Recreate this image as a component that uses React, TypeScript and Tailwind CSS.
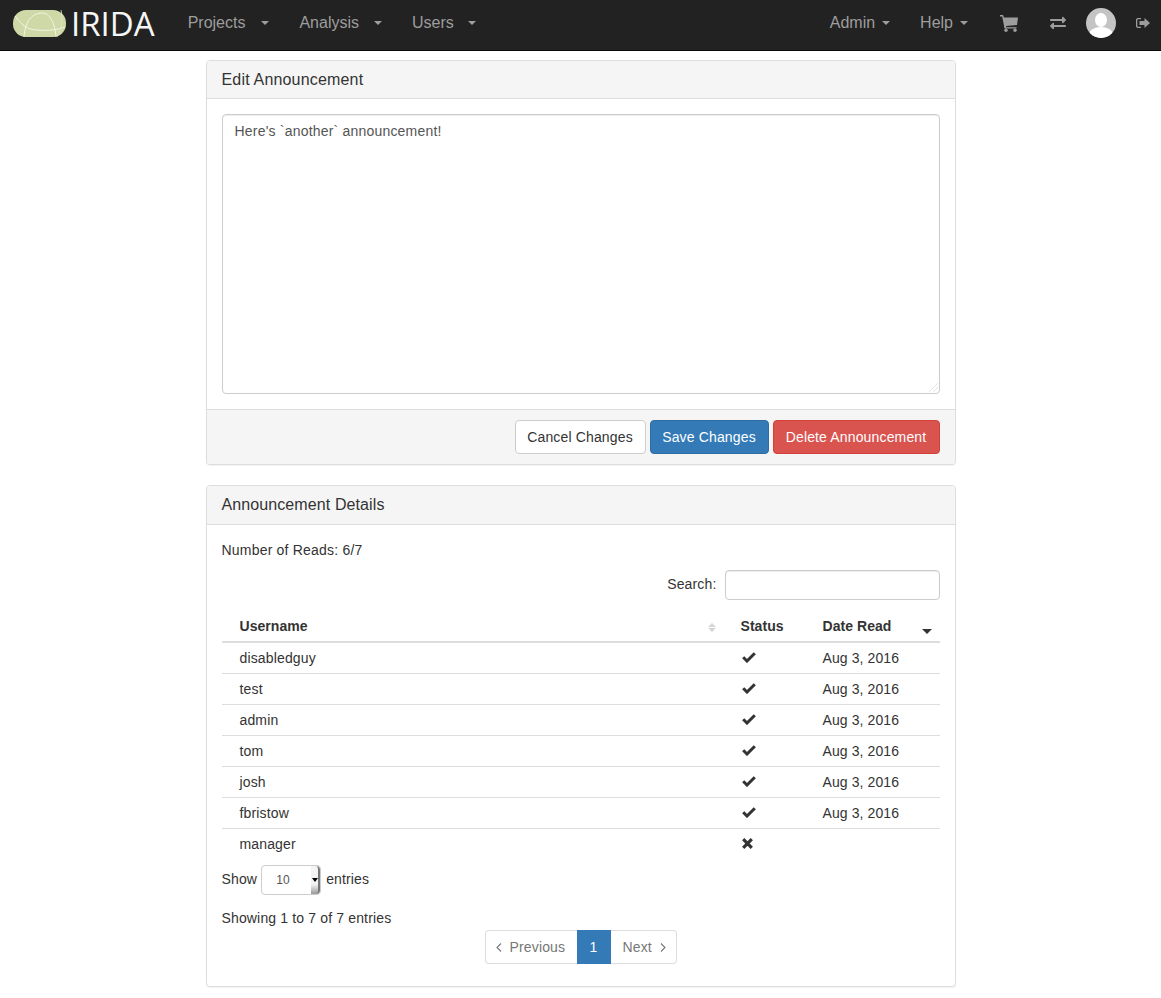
import { FaExchangeAlt } from "react-icons/fa";

const reads = [
  { name: "disabledguy", read: true },
  { name: "test", read: true },
  { name: "admin", read: true },
  { name: "tom", read: true },
  { name: "josh", read: true },
  { name: "fbristow", read: true },
  { name: "manager", read: false },
];

function Caret({ className }: { className: string }) {
  return <span className={`inline-block h-0 w-0 border-x-4 border-t-4 border-x-transparent border-t-[#9d9d9d] ${className}`} />;
}

function NavLink({ label, caretGap }: { label: string; caretGap: string }) {
  return (
    <a className="flex items-center text-base text-[#9d9d9d]">
      {label}
      <Caret className={caretGap} />
    </a>
  );
}

function Logo() {
  return (
    <svg width="53" height="27" viewBox="0 0 53 27" className="shrink-0">
      <rect x="0" y="0" width="53" height="27" rx="13" fill="#cfd9a8" />
      <path d="M2 6C8 14 14 20 24 20C34 21 44 20 52 17" fill="none" stroke="#f2f5e4" strokeWidth="1" />
      <path d="M11 27C12 13 18 3 29 3C37 3 42 13 43 27" fill="none" stroke="#f2f5e4" strokeWidth="1" />
      <path d="M48 0C50 8 49 17 44 27" fill="none" stroke="#dfe6c4" strokeWidth="0.8" />
    </svg>
  );
}

function CartIcon() {
  return (
    <svg width="18" height="17" viewBox="0 0 18 17" className="ml-[32px]" fill="#9d9d9d">
      <path d="M0 0h3l1 2.500h14l-1 7.500-11 1 .3 1.200H16.500V13.500H4.500L2.200 1.500H0z" />
      <circle cx="6" cy="15.300" r="1.700" />
      <circle cx="15" cy="15.300" r="1.700" />
    </svg>
  );
}

function Avatar() {
  return (
    <svg width="30" height="30" viewBox="0 0 30 30" className="ml-[20px]">
      <clipPath id="avatar-clip"><circle cx="15" cy="15" r="15" /></clipPath>
      <g clipPath="url(#avatar-clip)">
        <rect width="30" height="30" fill="#c4c4c4" />
        <ellipse cx="15" cy="12" rx="6" ry="7" fill="#fff" />
        <ellipse cx="15" cy="27" rx="12" ry="8" fill="#fff" />
      </g>
    </svg>
  );
}

function LogoutIcon() {
  return (
    <svg width="14" height="10" viewBox="0 0 14 10" className="ml-[20px]" fill="#9d9d9d">
      <path d="M5 0H2C.8 0 0 .8 0 2v6c0 1.200.8 2 2 2h3V8.700H2.300c-.6 0-1-.4-1-1V2.300c0-.6.4-1 1-1H5z" />
      <path d="M8.500 0L14 5l-5.500 5V7H3.500V3h5z" />
    </svg>
  );
}

function CheckIcon() {
  return (
    <svg width="14" height="11" viewBox="0 0 14 11" fill="none" stroke="#333" strokeWidth="3">
      <path d="M1.200 5.200L5 9L12.800 1.300" />
    </svg>
  );
}

function CrossIcon() {
  return (
    <svg width="11" height="11" viewBox="0 0 11 11" fill="none" stroke="#333" strokeWidth="3.200">
      <path d="M1.200 1.200L9.800 9.800M9.800 1.200L1.200 9.800" />
    </svg>
  );
}

function Chevron({ d }: { d: string }) {
  return (
    <svg width="6" height="9" viewBox="0 0 6 9" fill="none" stroke="#777" strokeWidth="1.100">
      <path d={d} />
    </svg>
  );
}

function SortIcon() {
  return (
    <span className="mt-[3px] flex flex-col gap-px">
      <span className="h-0 w-0 border-x-[4px] border-b-[4px] border-x-transparent border-b-[#d6d6d6]" />
      <span className="h-0 w-0 border-x-[4px] border-t-[4px] border-x-transparent border-t-[#d6d6d6]" />
    </span>
  );
}

function Panel({ title, tall, spacing, children }: { title: string; tall?: boolean; spacing: string; children: React.ReactNode }) {
  return (
    <section className="overflow-hidden rounded border border-[#ddd] bg-white shadow-[0_1px_1px_rgba(0,0,0,0.05)]">
      <h3 className={`${tall ? "h-[39px] leading-[38px]" : "h-[38px] leading-[37px]"} border-b border-[#ddd] bg-[#f5f5f5] px-[15px] text-base text-[#333] ${spacing}`}>{title}</h3>
      {children}
    </section>
  );
}

export default function App() {
  return (
    <div className="min-h-[998px] bg-white text-sm tracking-[0.15px] text-[#333] [font-family:'Liberation_Sans',Arial,sans-serif]">
      <nav className="flex h-[51px] items-center border-b border-[#080808] bg-[#222] pb-[4px] pl-[13px] tracking-normal">
        <Logo />
        <span className="ml-[5px] text-[33px] font-normal leading-none text-[#f6f6f6] [font-family:'Open_Sans','Liberation_Sans',sans-serif]">IRIDA</span>
        <div className="ml-[33px] flex items-center">
          <NavLink label="Projects" caretGap="ml-[16px]" />
          <div className="ml-[30px]"><NavLink label="Analysis" caretGap="ml-[15px]" /></div>
          <div className="ml-[30px]"><NavLink label="Users" caretGap="ml-[14px]" /></div>
        </div>
        <div className="ml-auto flex items-center pr-[11px]">
          <NavLink label="Admin" caretGap="ml-[7px]" />
          <div className="ml-[30px]"><NavLink label="Help" caretGap="ml-[7px]" /></div>
          <CartIcon />
          <FaExchangeAlt className="ml-[32px] text-[16px] text-[#9d9d9d]" />
          <Avatar />
          <LogoutIcon />
        </div>
      </nav>

      <main className="mx-auto mt-[9px] flex w-[750px] flex-col gap-[20px]">
        <Panel title="Edit Announcement" spacing="tracking-[0.18px]">
          <div className="p-[15px]">
            <div className="relative">
              <textarea
                readOnly
                defaultValue="Here's `another` announcement!"
                className="block h-[280px] w-full resize-none rounded border border-[#ccc] px-3 py-1.5 text-sm leading-5 tracking-[0.2px] text-[#555] shadow-[inset_0_1px_1px_rgba(0,0,0,0.075)] outline-none"
              />
              <svg width="9" height="9" viewBox="0 0 9 9" className="absolute bottom-[2px] right-[2px]" stroke="#e4e4e4" fill="none">
                <path d="M0 9L9 0M4 9L9 4" />
              </svg>
            </div>
          </div>
          <div className="flex h-[55px] items-center justify-end gap-1 border-t border-[#ddd] bg-[#f5f5f5] px-[15px]">
            <button className="h-[34px] w-[131px] rounded border border-[#ccc] bg-white text-[#333]">Cancel Changes</button>
            <button className="h-[34px] w-[119px] rounded border border-[#2e6da4] bg-[#337ab7] text-white">Save Changes</button>
            <button className="h-[34px] w-[167px] rounded border border-[#d43f3a] bg-[#d9534f] text-white">Delete Announcement</button>
          </div>
        </Panel>

        <Panel title="Announcement Details" tall spacing="tracking-[0.1px]">
          <div className="p-[15px] pb-[22px]">
            <p className="leading-5 tracking-[0.2px]">Number of Reads: 6/7</p>
            <div className="mt-[10px] flex items-center justify-end gap-2">
              <label className="pb-[2px] pl-px">Search:</label>
              <input className="h-[30px] w-[215px] rounded border border-[#ccc] shadow-[inset_0_1px_1px_rgba(0,0,0,0.075)] outline-none" />
            </div>
            <table className="mt-[10px] w-full border-collapse">
              <thead>
                <tr className="h-[32px] border-b-2 border-[#ddd] text-left font-bold tracking-[0.05px]">
                  <th className="w-[501px] pl-[18px]">
                    <div className="flex items-center justify-between pr-[7px]">Username<SortIcon /></div>
                  </th>
                  <th className="w-[81px] pl-[18px]">Status</th>
                  <th className="relative pl-[19px]">
                    Date Read
                    <span className="absolute right-[8px] top-[19px] h-0 w-0 border-x-[5px] border-t-[5px] border-x-transparent border-t-[#333]" />
                  </th>
                </tr>
              </thead>
              <tbody>
                {reads.map((r, i) => (
                  <tr key={r.name} className={`h-[31px] ${i < reads.length - 1 ? "border-b border-[#ddd]" : ""}`}>
                    <td className="pl-[18px]">{r.name}</td>
                    <td className="pl-[19px]">
                      {r.read ? <CheckIcon /> : <CrossIcon />}
                    </td>
                    <td className="pl-[19px] tracking-[0.1px]">{r.read ? "Aug 3, 2016" : ""}</td>
                  </tr>
                ))}
              </tbody>
            </table>
            <div className="mt-[6px] flex h-[30px] items-center">
              <span className="pb-[2px]">Show</span>
              <div className="relative ml-1 flex h-[30px] w-[60px] items-center rounded border border-[#ccc] pl-[14px] text-xs text-[#555]">
                10
                <span className="absolute inset-y-0 right-0 flex w-[9px] items-center justify-center rounded-r border-r-2 border-r-[#777] bg-[linear-gradient(#f4f4f4_65%,#999)]">
                  <span className="h-0 w-0 border-x-[3px] border-t-[4px] border-x-transparent border-t-black" />
                </span>
              </div>
              <span className="ml-[5px] pb-[2px]">entries</span>
            </div>
            <p className="mt-[13px] leading-5">Showing 1 to 7 of 7 entries</p>
            <div className="mt-[2px] flex justify-center">
              <div className="flex h-[34px] items-stretch">
                <a className="flex w-[92px] items-center gap-[8px] rounded-l border border-r-0 border-[#ddd] pl-[10px] text-[#777]">
                  <Chevron d="M5 .5L1 4.500L5 8.500" />Previous
                </a>
                <a className="flex w-[34px] items-center justify-center bg-[#337ab7] text-white">1</a>
                <a className="flex w-[66px] items-center gap-[8px] rounded-r border border-l-0 border-[#ddd] pl-[12px] text-[#777]">
                  Next<Chevron d="M1 .5L5 4.500L1 8.500" />
                </a>
              </div>
            </div>
          </div>
        </Panel>
      </main>
    </div>
  );
}
